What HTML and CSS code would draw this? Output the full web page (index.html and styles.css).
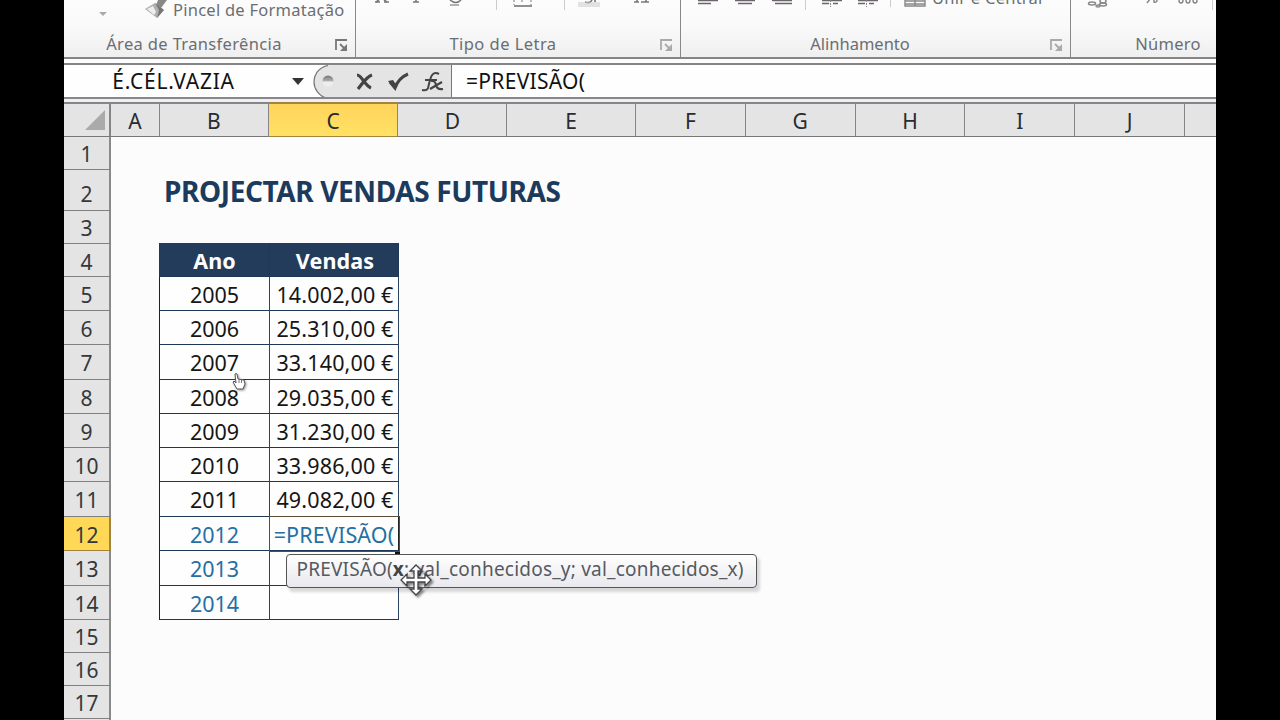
FILE: index.html
```html
<!DOCTYPE html>
<html lang="pt">
<head>
<meta charset="utf-8">
<title>Projectar vendas futuras</title>
<link rel="stylesheet" href="styles.css">
</head>
<body>
<div class="app">
  <div class="ribbon">
    <section class="group clip">
      <svg class="tools" width="292" height="32" viewBox="0 0 292 32">
        <path d="M35 12h8l-4 4z" fill="#aaa"/>
        <path d="M94 0h9l-6 8-5-3z" fill="#888"/>
        <path d="M81 9l10-6 9 7-7 8z" fill="#b0b0b0"/>
        <path d="M83 9l6-3 3 6-2 3z" fill="#eee"/>
        <path d="M91 3l9 7-7 8 2-8z" fill="#777"/>
      </svg>
      <span class="brush-label"><span class="t-brush">Pincel de Formatação</span></span>
      <footer><span class="t-clip">Área de Transferência</span></footer>
      <svg class="launch dark" viewBox="0 0 13 13"><path d="M1 11V1h11" /><path d="M5 5l6 6" /><path class="fill" d="M12 5v7H5z"/></svg>
    </section>
    <section class="group font">
      <svg class="tools" width="325" height="32" viewBox="0 0 325 32">
        <g stroke="#777" stroke-width="1.6" fill="none">
          <path d="M19 2h5M28 2h5M57 2h6M94 0q6 5 11 0"/>
          <path d="M20 2l3-2M31 2l-3-2M60 2V0"/>
          <path d="M94 5h9" stroke="#888" stroke-width="1.3"/>
          <path d="M158 0v5M175 0v5M166 0v4" stroke-dasharray="2 2" stroke="#aaa"/>
          <path d="M158 6h18" stroke="#555" stroke-width="1.3"/>
          <path d="M229 2q5 2 7-2M239 2V0M278 2h5M285 2h8M281 2V0M290 2V0"/>
        </g>
        <path d="M140.500 0v10M208.500 0v10" stroke="#ccc"/>
        <path d="M222 2h22v5h-22z" fill="#ccc" opacity=".55"/>
      </svg>
      <footer><span class="t-font">Tipo de Letra</span></footer>
      <svg class="launch" viewBox="0 0 13 13"><path d="M1 11V1h11" /><path d="M5 5l6 6" /><path class="fill" d="M12 5v7H5z"/></svg>
    </section>
    <section class="group align">
      <svg class="tools" width="389" height="32" viewBox="0 0 389 32">
        <path d="M17 .5h20M17 3.500h13M54 .5h20M57 3.500h14M91 .5h20M94 3.500h17M141 .5h20M141 3.500h7M152 3.500h5M177 .5h20M177 3.500h7M188 3.500h5" stroke="#6c646c" stroke-width="1.5"/>
        <path d="M149.500 0v7M185.500 0v7" stroke="#888" stroke-dasharray="2 1"/>
        <path d="M124.500 0v10M209.500 0v7" stroke="#ccc"/>
        <path d="M224 0v6h20V0M224 1h20M224 4h20M234 0v6" fill="none" stroke="#888" stroke-width="1.4"/>
      </svg>
      <span class="merge-label"><span class="t-merge">Unir e Centrar</span></span>
      <footer><span class="t-align">Alinhamento</span></footer>
      <svg class="launch" viewBox="0 0 13 13"><path d="M1 11V1h11" /><path d="M5 5l6 6" /><path class="fill" d="M12 5v7H5z"/></svg>
    </section>
    <section class="group number">
      <svg class="tools" width="146" height="32" viewBox="0 0 146 32">
        <g fill="none" stroke="#888" stroke-width="1.5">
          <ellipse cx="21" cy="3.500" rx="3.500" ry="1.500"/><ellipse cx="32" cy="1" rx="3" ry="2"/><ellipse cx="32" cy="4.500" rx="3.500" ry="1.500"/><ellipse cx="27" cy="6" rx="2" ry="1"/>
          <path d="M76 3l3-4M83 0v2q2 1 3-1V0M108 0q0 3 2 3t2-3M115 0q0 3 2 3t2-3M122 0q0 3 2 3t2-3"/>
        </g>
        <path d="M141.500 0v10" stroke="#ccc"/>
      </svg>
      <footer><span class="t-num">Número</span></footer>
    </section>
  </div>

  <div class="formula-bar">
    <div class="name-box"><span class="t-name">É.CÉL.VAZIA</span></div>
    <svg class="fx-tools" width="160" height="34" viewBox="0 0 160 34">
      <defs><linearGradient id="knob" x2="0" y2="1"><stop stop-color="#777"/><stop offset=".45" stop-color="#aaa"/><stop offset=".6" stop-color="#eee"/><stop offset="1" stop-color="#eee"/></linearGradient></defs>
      <path d="M159 0H40C25 0 22 11 22 17s3 16 18 17h119z" fill="#e4e4e4"/>
      <path d="M36 .5C25 3 22 11 22 17s4 14 14 16.500" fill="none" stroke="#777" stroke-width="1.2"/>
      <path d="M0 13h12l-6 7z" fill="#333"/>
      <circle cx="36" cy="16" r="5.500" fill="url(#knob)"/>
      <path d="M65 10c5 0 7 10 14 13M80 10c-6 2-9 8-14 14" fill="none" stroke="#444" stroke-width="3.200"/>
      <path d="M98 17l5 6c2-6 6-11 13-14" fill="none" stroke="#444" stroke-width="3"/><path d="M96 16l5-1 4 6-2 4z" fill="#444"/>
      <path d="M147 9c-6-3-8 2-9 6l-2 8q-1 3-6 2M133 15h12" fill="none" stroke="#444" stroke-width="2"/>
      <path d="M139 16q4-1 5 4t7 4M150 17l-12 7" fill="none" stroke="#444" stroke-width="2.200"/>
      <path d="M159.500 0v34" stroke="#777"/>
    </svg>
    <div class="formula"><span class="t-formula">=PREVISÃO(</span></div>
  </div>

  <div class="sheet">
    <div class="row heads">
      <div class="corner"><svg width="20" height="20" viewBox="0 0 20 20"><path d="M20 0v20H0z" fill="#aaa"/></svg></div>
      <div>A</div><div>B</div><div class="active">C</div><div>D</div><div>E</div><div>F</div><div>G</div><div>H</div><div>I</div><div>J</div><div></div>
    </div>
    <div class="row h33"><b class="rh">1</b></div>
    <div class="row h41"><b class="rh r2">2</b><i></i><h1><span class="t-title">PROJECTAR VENDAS FUTURAS</span></h1></div>
    <div class="row h33"><b class="rh">3</b></div>
    <div class="row h33 data th"><b class="rh">4</b><i></i><span class="cb"><span class="t-ano">Ano</span></span><span class="cc"><span class="t-ven">Vendas</span></span></div>
    <div class="row h34 data"><b class="rh">5</b><i></i><span class="cb">2005</span><span class="cc">14.002,00 €</span></div>
    <div class="row h34 data"><b class="rh">6</b><i></i><span class="cb">2006</span><span class="cc">25.310,00 €</span></div>
    <div class="row h35 data"><b class="rh">7</b><i></i><span class="cb">2007</span><span class="cc">33.140,00 €</span></div>
    <div class="row h34 data"><b class="rh">8</b><i></i><span class="cb">2008</span><span class="cc">29.035,00 €</span></div>
    <div class="row h34 data"><b class="rh">9</b><i></i><span class="cb">2009</span><span class="cc">31.230,00 €</span></div>
    <div class="row h34 data"><b class="rh">10</b><i></i><span class="cb">2010</span><span class="cc">33.986,00 €</span></div>
    <div class="row h35 data"><b class="rh">11</b><i></i><span class="cb">2011</span><span class="cc">49.082,00 €</span></div>
    <div class="row h34 data future"><b class="rh active">12</b><i></i><span class="cb">2012</span><span class="cc editing"><span class="t-edit">=PREVISÃO(</span></span></div>
    <div class="row h35 data future"><b class="rh">13</b><i></i><span class="cb">2013</span><span class="cc"></span></div>
    <div class="row h34 data future"><b class="rh">14</b><i></i><span class="cb">2014</span><span class="cc"></span></div>
    <div class="row h33"><b class="rh">15</b></div>
    <div class="row h33"><b class="rh">16</b></div>
    <div class="row h33"><b class="rh">17</b></div>
    <div class="row h33"><b class="rh"></b></div>
  </div>

  <div class="fill-handle"></div>
  <div class="tooltip"><span class="t-tip">PREVISÃO(<strong>x</strong>; val_conhecidos_y; val_conhecidos_x)</span></div>
  <svg class="move" width="34" height="34" viewBox="0 0 34 34">
    <path d="M16 1l6 6h-4v7h7v-4l6 6-6 6v-4h-7v7h4l-6 6-6-6h4v-7H7v4l-6-6 6-6v4h7V7h-4z" fill="#fff" stroke="#444" stroke-width="1.300"/>
  </svg>
  <svg class="hand" width="15" height="18" viewBox="0 0 15 18">
    <path d="M3 1q1-1 2 0l1 5 6 1 1 4-2 5H5L1 9l1-1 2 2z" fill="#fff" stroke="#555"/><path d="M7 7v3M9.500 7v3" stroke="#777"/>
  </svg>
</div>
</body>
</html>
```
FILE: styles.css
```css
* { box-sizing: border-box; }
body { margin: 0; background: #000; font-family: "Noto Sans", "Open Sans", sans-serif; }
.app { position: relative; width: 1152px; height: 720px; margin: 0 auto; background: #fcfcfc; overflow: hidden; display: flex; flex-direction: column; }
.app span > span, h1 span, footer span, .name-box span, .formula span, .tooltip > span { display: inline-block; white-space: nowrap; }

.ribbon { display: flex; flex: none; height: 59px; border-bottom: 2px solid #858585; background: linear-gradient(#fdfcfd, #f9f9f9 50%, #efefef); }
.group { position: relative; display: flex; flex-direction: column; justify-content: flex-end; border-right: 1px solid #888; color: #6a6e72; font-size: 16.5px; }
.clip { width: 292px; }
.font { width: 325px; }
.align { width: 390px; }
.number { width: 145px; border: 0; }
.tools { position: absolute; top: 0; left: 0; }
.group footer { height: 26px; line-height: 26px; text-align: center; }
.clip footer { padding-right: 31px; letter-spacing: .35px; }
.font footer { padding-right: 30px; letter-spacing: .45px; }
.align footer { padding-right: 31px; }
.number footer { padding-left: 49px; letter-spacing: .3px; }
.launch { position: absolute; right: 7px; bottom: 5px; width: 13px; height: 13px; }
.launch path { fill: none; stroke: #aaa; stroke-width: 1.8; }
.launch .fill { fill: #aaa; stroke: none; }
.launch.dark path { stroke: #777; }
.launch.dark .fill { fill: #777; stroke: none; }
.brush-label { position: absolute; left: 109px; top: 0; line-height: 20px; letter-spacing: .25px; }
.merge-label { position: absolute; left: 251px; top: -14px; line-height: 24px; letter-spacing: .25px; }

.formula-bar { display: flex; flex: none; height: 39px; margin-top: 4px; border-top: 2px solid #858585; position: relative; background: #fefefe; font-size: 21px; color: #111; }
.formula-bar::after { content: ""; position: absolute; left: 0; right: 0; bottom: 0; height: 5px; background: linear-gradient(#888 2px, #f0eef4 2px); }
.name-box { width: 228px; line-height: 32px; text-align: center; padding-right: 9px; letter-spacing: .75px; }
.fx-tools { flex: none; }
.formula { line-height: 32px; padding-left: 14px; letter-spacing: .3px; }

.sheet { flex: 1; display: flex; flex-direction: column; }
.row { display: flex; flex: none; font-size: 21.5px; }
.heads { height: 35px; }
.heads > div { background: #e4e4e4; border-right: 1px solid #858585; border-top: 2px solid #858585; border-bottom: 1px solid #777; text-align: center; line-height: 35px; color: #282c32; font-size: 21px; width: 110px; }
.heads > div:nth-child(1) { width: 47px; border-right-width: 2px; display: flex; justify-content: flex-end; align-items: center; padding-right: 4px; }
.heads > div:nth-child(2) { width: 49px; }
.heads > div:nth-child(3) { width: 109px; }
.heads > div:nth-child(4) { width: 130px; }
.heads > div:nth-child(5) { width: 109px; }
.heads > div:nth-child(6) { width: 129px; }
.heads > div:nth-child(12) { width: 31px; border-right: 0; }
.heads > .active { background: linear-gradient(#ffd45c, #ffe264); border-color: #a08440; }
.h33 { height: 33px; }
.h34 { height: 34px; }
.h35 { height: 35px; }
.h41 { height: 41px; }
.rh { width: 47px; font-weight: 400; text-align: center; background: #e4e4e4; border-right: 2px solid #8a8a8a; border-bottom: 1px solid #808080; color: #34383c; font-size: 21px; line-height: 35px; }
.rh.r2 { line-height: 49px; }
.data .rh { line-height: 36px; }
.rh.active { background: #ffd858; border-color: #a08440; }
.row i { width: 48px; }
h1 { margin: 0 0 0 5px; font-size: 28px; line-height: 42px; font-weight: 700; color: #1b3a5c; letter-spacing: -.38px; }
.cb, .cc { border-right: 1px solid #2c4464; border-bottom: 1px solid #1f3856; background: #fefefe; text-align: center; line-height: 36px; color: #161616; white-space: nowrap; }
.cb { width: 111px; border-left: 1px solid #10243c; }
.cc { width: 129px; letter-spacing: .15px; padding-left: 2px; }
.th .cb, .th .cc { background: #243c5b; color: #fff; font-weight: 700; border-color: #1f3856; line-height: 35px; margin-top: -1px; }
.future .cb, .editing { color: #2470a4; }
.editing { box-shadow: 0 0 0 1px #5c4c34; z-index: 1; border-right-color: #222; padding-left: 0; }

.fill-handle { position: absolute; left: 331px; top: 548px; width: 5px; height: 6px; background: #111; }
.tooltip { position: absolute; left: 222px; top: 554px; width: 471px; height: 34px; border: 1.5px solid #555; border-radius: 4px; background: linear-gradient(#fff, #e8e8ee); box-shadow: 3px 4px 3px rgba(0,0,0,.15); color: #555a60; font-size: 19px; line-height: 28px; padding-left: 9.5px; letter-spacing: .21px; z-index: 2; }
.tooltip strong { color: #444; }
.move { position: absolute; left: 336px; top: 564px; z-index: 3; filter: drop-shadow(2px 2px 1px rgba(0,0,0,.45)); }
.hand { position: absolute; left: 168px; top: 373px; z-index: 3; filter: drop-shadow(1px 1px 1px rgba(0,0,0,.4)); }
```
